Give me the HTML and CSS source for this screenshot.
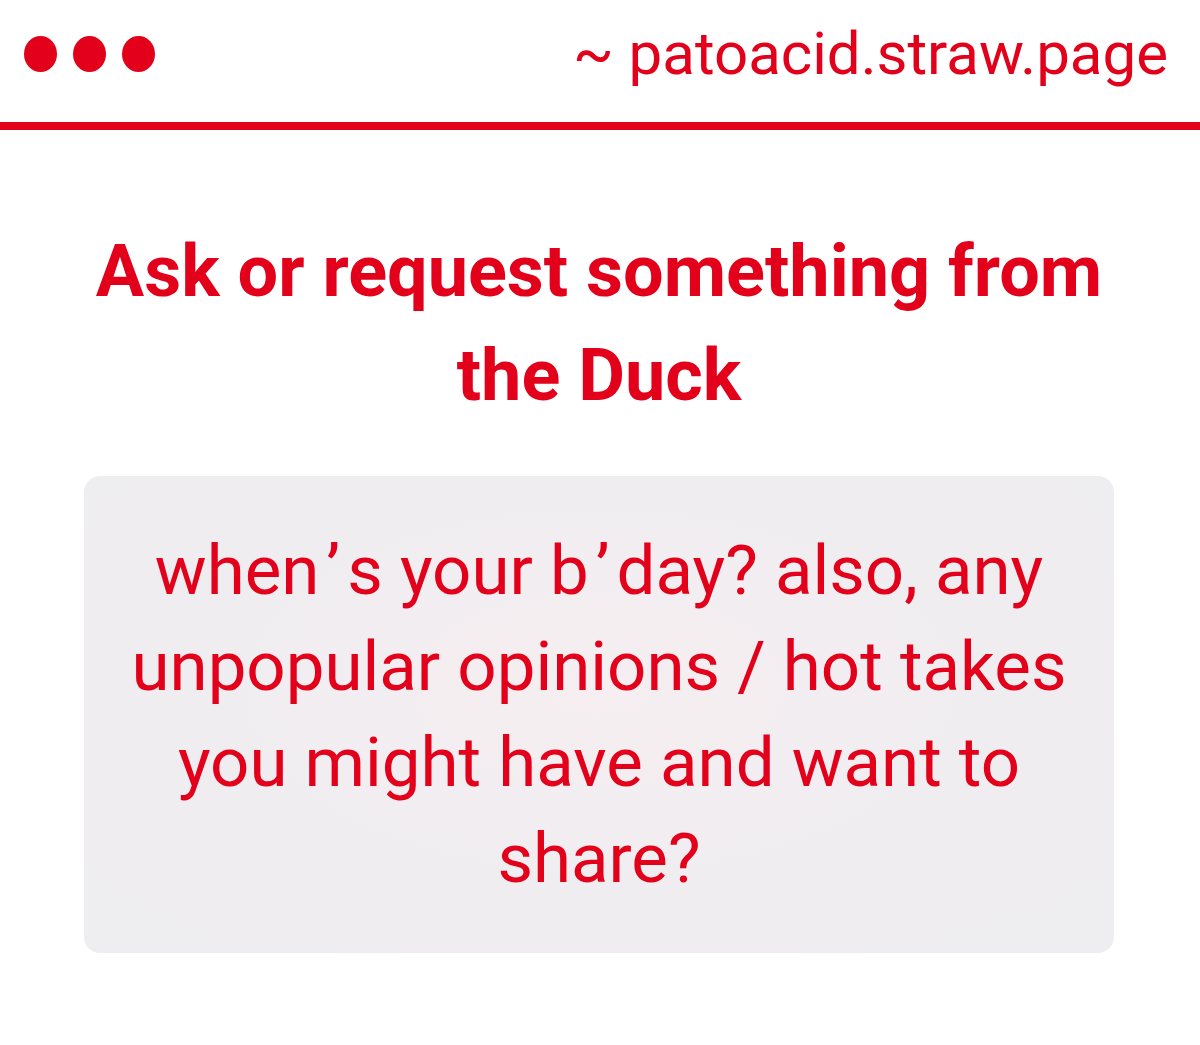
FILE: index.html
```html
<!DOCTYPE html>
<html lang="en">
<head>
    <meta charset="UTF-8">
    <meta name="viewport" content="width=device-width, initial-scale=1.0">
    <title>patoacid.straw.page</title>
    <link rel="stylesheet" href="styles.css">
</head>
<body>
<div class="topbar">
    <div class="dots">
        <span class="dot"></span>
        <span class="dot"></span>
        <span class="dot"></span>
    </div>
    <div class="site">~ patoacid.straw.page</div>
</div>
<div class="content">
    <h1 class="title">Ask or request something from the Duck</h1>
    <div class="card">
        <p class="question">when&#8202;’&#8202;s your b&#8202;’&#8202;day? also, any unpopular opinions / hot takes you might have and want to share?</p>
    </div>
</div>
</body>
</html>
```

FILE: styles.css
```css
body {
    margin: 0;
    background: #fff;
    font-family: Roboto, "Liberation Sans", sans-serif;
    color: #e2001a;
}

/* верхняя полоса */
.topbar {
    display: flex;
    justify-content: space-between;
    align-items: center;
    box-sizing: border-box;
    height: 130px;
    padding: 0 32px 14px 24px;
    border-bottom: 8px solid #e2001a;
}

.dots {
    display: flex;
    gap: 16px;
}

.dot {
    width: 33px;
    height: 36px;
    border-radius: 50%;
    background: #e2001a;
}

.site {
    font-size: 60px;
    line-height: 1;
}

.content {
    padding: 0 86px 0 84px;
}

.title {
    margin: 90px 0 48px;
    font-size: 72px;
    font-weight: 700;
    line-height: 104px;
    text-align: center;
}

.card {
    background: radial-gradient(ellipse at 50% 45%, #f6eef1 0%, #efedf0 60%, #eeedef 100%);
    border-radius: 16px;
    height: 477px;
    display: flex;
    align-items: center;
    justify-content: center;
    padding: 0 40px;
}

.question {
    margin: 0;
    font-size: 69px;
    line-height: 96px;
    text-align: center;
}
```
